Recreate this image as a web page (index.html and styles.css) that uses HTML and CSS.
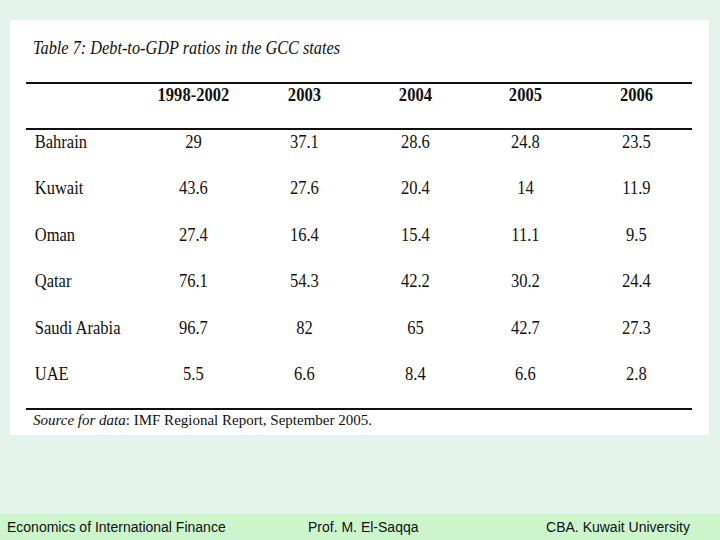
FILE: index.html
```html
<!DOCTYPE html>
<html>
<head>
<meta charset="utf-8">
<link rel="stylesheet" href="styles.css">
</head>
<body>
<div class="slide">
  <main class="stage">
    <section class="panel">
      <h1 class="title">Table 7: Debt-to-GDP ratios in the GCC states</h1>
      <div class="table">
        <div class="row head">
          <span class="label"></span>
          <span>1998-2002</span><span>2003</span><span>2004</span><span>2005</span><span>2006</span>
        </div>
        <div class="row">
          <span class="label">Bahrain</span>
          <span>29</span><span>37.1</span><span>28.6</span><span>24.8</span><span>23.5</span>
        </div>
        <div class="row">
          <span class="label">Kuwait</span>
          <span>43.6</span><span>27.6</span><span>20.4</span><span>14</span><span>11.9</span>
        </div>
        <div class="row">
          <span class="label">Oman</span>
          <span>27.4</span><span>16.4</span><span>15.4</span><span>11.1</span><span>9.5</span>
        </div>
        <div class="row">
          <span class="label">Qatar</span>
          <span>76.1</span><span>54.3</span><span>42.2</span><span>30.2</span><span>24.4</span>
        </div>
        <div class="row">
          <span class="label">Saudi Arabia</span>
          <span>96.7</span><span>82</span><span>65</span><span>42.7</span><span>27.3</span>
        </div>
        <div class="row">
          <span class="label">UAE</span>
          <span>5.5</span><span>6.6</span><span>8.4</span><span>6.6</span><span>2.8</span>
        </div>
        <p class="source"><em>Source for data</em>: IMF Regional Report, September 2005.</p>
      </div>
    </section>
  </main>
  <footer class="footer">
    <span>Economics of International Finance</span>
    <span>Prof. M. El-Saqqa</span>
    <span>CBA. Kuwait University</span>
  </footer>
</div>
</body>
</html>
```

FILE: styles.css
```css
* { box-sizing: border-box; }
html, body { margin: 0; padding: 0; }
body { width: 720px; height: 540px; overflow: hidden; }

.slide {
  width: 720px;
  height: 540px;
  display: flex;
  flex-direction: column;
  background: #e5f3ed;
}

.stage {
  flex: 1;
  padding: 20px 0 0 10px;
}

.panel {
  width: 699px;
  height: 415px;
  background: #ffffff;
  padding: 16px 17px 0 16px;
  font-family: "Liberation Serif", "Times New Roman", serif;
  color: #111;
}

.title {
  margin: 0 0 22px 7px;
  font-size: 18.5px;
  line-height: 24px;
  font-style: italic;
  font-weight: normal;
  transform: scaleX(0.88);
  transform-origin: left center;
  white-space: nowrap;
}

.table {
  border-top: 2px solid #111;
  border-bottom: 2px solid #111;
  position: relative;
}

.row {
  display: grid;
  grid-template-columns: 112px repeat(5, 1fr);
  height: 46.4px;
  padding-top: 1px;
  font-size: 19px;
  line-height: 22px;
}

.row span {
  text-align: center;
  white-space: nowrap;
  transform: scaleX(0.87);
}
.row .label {
  text-align: left;
  padding-left: 10px;
  transform-origin: left center;
}

.row.head {
  height: 46px;
  padding-top: 0;
  font-weight: bold;
  border-bottom: 2px solid #111;
}

.source {
  position: absolute;
  left: 7px;
  top: 100%;
  margin: 2px 0 0;
  font-size: 15px;
  line-height: 20px;
  white-space: nowrap;
}

.footer {
  height: 26px;
  background: #ccf5cc;
  display: grid;
  grid-template-columns: 301px 1fr auto;
  align-items: center;
  padding: 0 30px 0 7px;
  font-family: "Liberation Sans", Arial, sans-serif;
  font-size: 14px;
  color: #111;
}
```
